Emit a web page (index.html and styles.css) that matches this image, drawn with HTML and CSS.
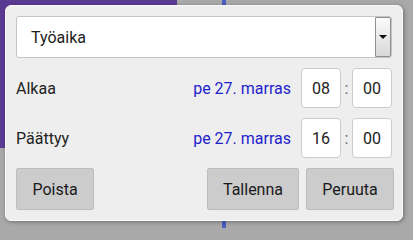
FILE: index.html
```html
<!DOCTYPE html>
<html>
<head>
<meta charset="utf-8">
<link rel="stylesheet" href="styles.css">
</head>
<body>
<div class="backdrop">
  <div class="purple"></div>
  <div class="nowline"></div>
</div>
<div class="dialog">
  <div class="select">
    <span class="select-text">Työaika</span>
    <span class="select-btn"><span class="tri"></span></span>
  </div>
  <div class="row">
    <span class="label">Alkaa</span>
    <span class="date">pe 27. marras</span>
    <span class="time">08</span>
    <span class="colon">:</span>
    <span class="time">00</span>
  </div>
  <div class="row">
    <span class="label">Päättyy</span>
    <span class="date">pe 27. marras</span>
    <span class="time">16</span>
    <span class="colon">:</span>
    <span class="time">00</span>
  </div>
  <div class="buttons">
    <span class="btn btn-delete">Poista</span>
    <span class="spacer"></span>
    <span class="btn btn-save">Tallenna</span>
    <span class="btn btn-cancel">Peruuta</span>
  </div>
</div>
</body>
</html>
```
FILE: styles.css
```css
html, body {
  margin: 0;
  padding: 0;
  width: 413px;
  height: 228px;
  overflow: hidden;
  background: #a9a9a9;
  font-family: Roboto, "Liberation Sans", sans-serif;
}
.backdrop {
  position: absolute;
  left: 0;
  top: 0;
  width: 413px;
  height: 228px;
}
.purple {
  position: absolute;
  left: 0;
  top: 0;
  width: 177px;
  height: 148px;
  background: #5b3a94;
}
.nowline {
  position: absolute;
  left: 222px;
  top: 0;
  width: 4px;
  height: 228px;
  background: #4a5fc4;
}
.dialog {
  position: absolute;
  left: 5px;
  top: 5px;
  width: 376px;
  height: 194px;
  padding: 10px;
  background: #eeeeee;
  border: 1px solid #f9f9f9;
  border-radius: 6px;
  box-shadow: 1px 1px 4px rgba(0,0,0,0.35);
  display: flex;
  flex-direction: column;
  gap: 10px;
  color: #222;
  font-size: 16px;
}
.select {
  box-sizing: border-box;
  height: 42px;
  background: #fff;
  border: 1px solid #c4c4c4;
  border-radius: 3px;
  display: flex;
  align-items: center;
  justify-content: space-between;
}
.select-text {
  padding-left: 14px;
  color: #222;
}
.select-btn {
  box-sizing: border-box;
  width: 16px;
  height: 40px;
  border: 1px solid #8f8f8f;
  background: linear-gradient(#fbfbfb, #d8d8d8);
  border-radius: 0 2px 2px 0;
  display: flex;
  align-items: center;
  justify-content: center;
}
.tri {
  width: 0;
  height: 0;
  border-left: 4px solid transparent;
  border-right: 4px solid transparent;
  border-top: 4px solid #111;
}
.row {
  height: 40px;
  display: flex;
  align-items: center;
}
.label {
  flex: 1;
}
.date {
  color: #1f1fcc;
  margin-right: 10px;
}
.time {
  box-sizing: border-box;
  width: 40px;
  height: 40px;
  background: #fff;
  border: 1px solid #cccccc;
  border-radius: 4px;
  display: flex;
  align-items: center;
  justify-content: center;
}
.colon {
  width: 11px;
  text-align: center;
  color: #666;
}
.buttons {
  height: 42px;
  display: flex;
  gap: 7px;
}
.spacer {
  flex: 1;
}
.btn {
  box-sizing: border-box;
  height: 42px;
  background: #cccccc;
  border: 1px solid #bdbdbd;
  border-radius: 2px;
  display: flex;
  align-items: center;
  justify-content: center;
  color: #1a1a1a;
}
.btn-delete { width: 78px; }
.btn-save { width: 92px; }
.btn-cancel { width: 88px; margin-right: -2px; }
```
